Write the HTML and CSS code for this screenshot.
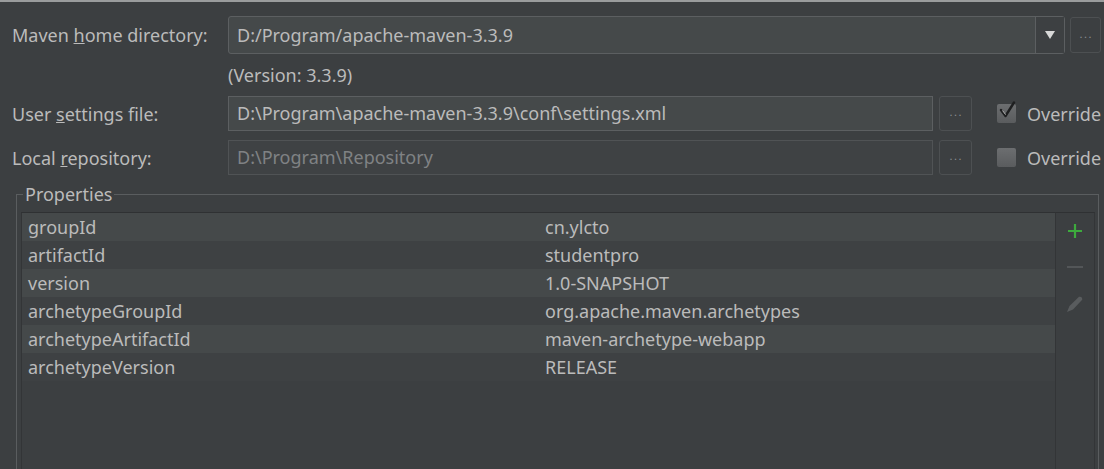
FILE: index.html
```html
<!DOCTYPE html>
<html>
<head>
<meta charset="utf-8">
<link rel="stylesheet" href="styles.css">
</head>
<body>
<div class="panel">
  <div class="row row-home">
    <label class="lbl">Maven <u>h</u>ome directory:</label>
    <div class="combo">
      <span class="combo-text">D:/Program/apache-maven-3.3.9</span>
      <span class="combo-arrow"><svg width="10" height="8" viewBox="0 0 10 8"><path d="M0 0 H10 L5 8 Z" fill="#d8d8d8"/></svg></span>
    </div>
    <button class="dots dots-home">...</button>
  </div>
  <div class="version">(Version: 3.3.9)</div>
  <div class="row row-file">
    <label class="lbl">User <u>s</u>ettings file:</label>
    <div class="field">D:\Program\apache-maven-3.3.9\conf\settings.xml</div>
    <button class="dots">...</button>
    <span class="check checked"><svg width="20" height="20" viewBox="0 0 20 20"><path d="M4 9 L8.5 15 L17 1.5" fill="none" stroke="#1e1f20" stroke-width="2.4" stroke-linejoin="round" stroke-linecap="round"/><path d="M5.5 9.5 L8.6 13.6" stroke="#e0e0e0" stroke-width="0.8" fill="none"/></svg></span>
    <span class="ovr">Override</span>
  </div>
  <div class="row row-repo">
    <label class="lbl">Local <u>r</u>epository:</label>
    <div class="field disabled">D:\Program\Repository</div>
    <button class="dots">...</button>
    <span class="check"></span>
    <span class="ovr">Override</span>
  </div>

  <fieldset class="props">
    <legend>Properties</legend>
    <div class="props-body">
      <div class="table">
        <div class="tr"><span class="k">groupId</span><span class="v">cn.ylcto</span></div>
        <div class="tr"><span class="k">artifactId</span><span class="v">studentpro</span></div>
        <div class="tr"><span class="k">version</span><span class="v">1.0-SNAPSHOT</span></div>
        <div class="tr"><span class="k">archetypeGroupId</span><span class="v">org.apache.maven.archetypes</span></div>
        <div class="tr"><span class="k">archetypeArtifactId</span><span class="v">maven-archetype-webapp</span></div>
        <div class="tr"><span class="k">archetypeVersion</span><span class="v">RELEASE</span></div>
      </div>
      <div class="tools">
        <span class="tool"><svg width="16" height="16" viewBox="0 0 16 16"><path d="M8 1 V15 M1 8 H15" stroke="#3daa3d" stroke-width="2.2"/></svg></span>
        <span class="tool"><svg width="18" height="16" viewBox="0 0 18 16"><path d="M1 8 H17" stroke="#535658" stroke-width="2"/></svg></span>
        <span class="tool"><svg width="18" height="18" viewBox="0 0 18 18"><path d="M1 17 L3.5 11 L13 1.8 Q16.5 1.2 16.2 4.8 L7 14.5 Z" fill="#595c5e"/></svg></span>
      </div>
    </div>
  </fieldset>
</div>
</body>
</html>
```

FILE: styles.css
```css
html, body {
  margin: 0;
  padding: 0;
  height: 100%;
  background: #3c3f41;
  overflow: hidden;
}
body {
  font-family: "Noto Sans", "Open Sans", sans-serif;
  font-size: 18px;
  color: #bbbbbb;
}
.panel {
  border-top: 2px solid #9a9c9d;
  height: 100%;
  box-sizing: border-box;
  padding-top: 14px;
  overflow: hidden;
}
.row {
  display: flex;
  align-items: center;
  padding-left: 12px;
}
.lbl {
  width: 216px;
  flex: none;
  white-space: nowrap;
}
.row-home { height: 38px; }
.combo {
  width: 837px;
  height: 38px;
  box-sizing: border-box;
  border: 1px solid #5c5f61;
  border-radius: 3px;
  background: #45494a;
  display: flex;
  align-items: center;
  flex: none;
}
.combo-text {
  flex: 1;
  padding-left: 8px;
}
.combo-arrow {
  width: 29px;
  height: 100%;
  border-left: 1px solid #5c5f61;
  background: #3d4042;
  display: flex;
  align-items: center;
  justify-content: center;
  box-sizing: border-box;
}
.dots {
  width: 33px;
  height: 35px;
  box-sizing: border-box;
  margin-left: 6px;
  border: 1px solid #4d5052;
  border-radius: 3px;
  background: #3c3f41;
  color: #8a8d8f;
  font-family: "DejaVu Sans", sans-serif;
  font-size: 11px;
  letter-spacing: 1px;
  padding: 0 0 2px 1px;
  flex: none;
}
.dots-home {
  width: 31px;
  height: 36px;
  margin-left: 5px;
}
.version {
  padding-left: 228px;
  height: 42px;
  line-height: 42px;
}
.row-file, .row-repo { height: 35px; }
.row-repo { margin-top: 9px; }
.field {
  width: 705px;
  height: 35px;
  box-sizing: border-box;
  border: 1px solid #5c5f61;
  background: #45494a;
  padding-left: 8px;
  line-height: 33px;
  white-space: nowrap;
  overflow: hidden;
  flex: none;
}
.field.disabled {
  color: #808284;
  background: #3f4244;
  border-color: #505355;
}
.check {
  width: 19px;
  height: 19px;
  margin-left: 25px;
  background: linear-gradient(#6c6e70, #5a5c5e);
  border-radius: 2px;
  position: relative;
  flex: none;
}
.check svg {
  position: absolute;
  left: 0;
  top: -3px;
}
.ovr {
  margin-left: 11px;
  white-space: nowrap;
}
.props {
  margin: 9px 5px 0 16px;
  padding: 8px 3px 0 4px;
  border: 1px solid #5a5d5f;
  border-bottom: none;
  height: 300px;
  min-width: 0;
}
.props legend {
  padding: 0 2px;
  margin-left: 2px;
  line-height: 20px;
}
.props-body {
  display: flex;
  height: 100%;
}
.table {
  flex: 1;
  border-top: 1px solid #2f3133;
  border-left: 1px solid #333537;
  border-right: 1px solid #333537;
  background: #3c3f41;
}
.tr {
  display: grid;
  grid-template-columns: 523px 1fr;
  height: 28px;
  align-items: center;
  background: #3e4143;
  white-space: nowrap;
}
.tr:nth-child(odd) {
  background: #45494a;
}
.k { padding-left: 6px; }
.tools {
  width: 38px;
  border-top: 1px solid #2f3133;
  border-right: 1px solid #333537;
  display: flex;
  flex-direction: column;
  align-items: center;
  padding-top: 10px;
  gap: 20px;
}
.tool {
  display: flex;
  justify-content: center;
  width: 18px;
  height: 16px;
}
.tool:last-child { height: 18px; }
```
